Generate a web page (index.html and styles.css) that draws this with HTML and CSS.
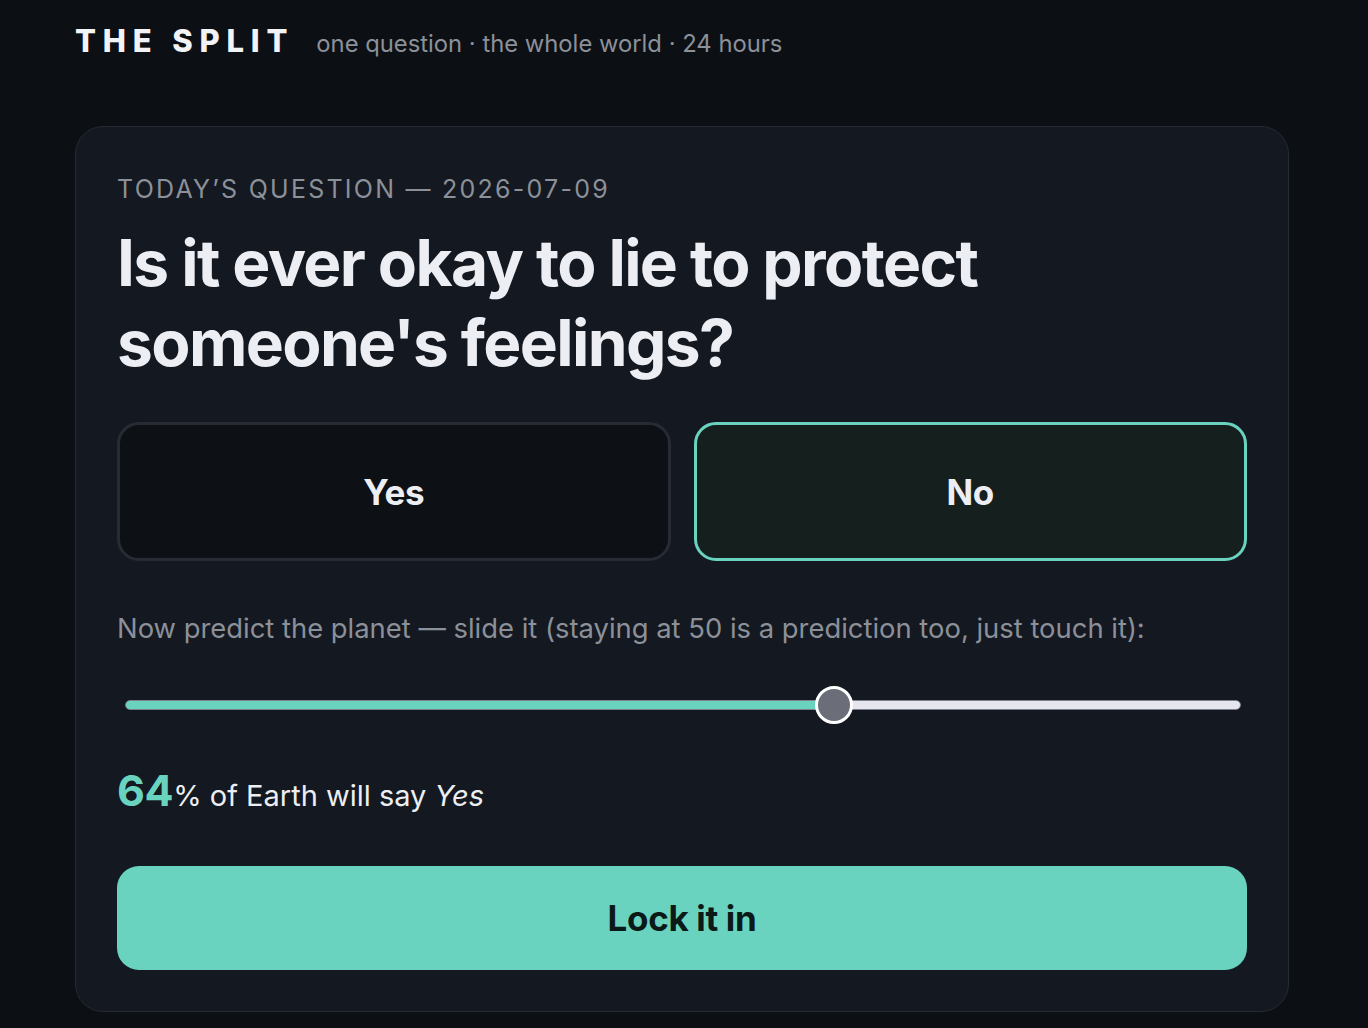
FILE: index.html
```html
<!DOCTYPE html>
<html lang="en">
<head>
  <meta charset="UTF-8">
  <meta name="viewport" content="width=device-width,initial-scale=1">
  <title>The Split</title>
  <link rel="stylesheet" href="styles.css">
</head>
<body>
  <div class="container">
    <header class="header">
      <span class="logo">THE SPLIT</span>
      <span class="tagline">one question · the whole world · 24 hours</span>
    </header>

    <main class="card">
      <p class="eyebrow">Today’s question — 2026-07-09</p>
      <h1 class="question">Is it ever okay to lie to protect<br>someone's feelings?</h1>

      <div class="choices">
        <button class="choice">Yes</button>
        <button class="choice selected">No</button>
      </div>

      <p class="prompt">Now predict the planet — slide it (staying at 50 is a prediction too, just touch it):</p>

      <input class="slider" type="range" min="0" max="100" value="64" aria-label="Predicted percentage saying yes" style="--fill: 64%">

      <p class="guess"><span class="guess-num">64</span>% of Earth will say <em>Yes</em></p>

      <button class="lock">Lock it in</button>
    </main>
  </div>
</body>
</html>
```

FILE: styles.css
```css
:root { --bg: #0c0f14; --card: #141820; --card-border: #252a33; --text: #eceef3; --muted: #8b9099; --accent: #69d3c0; }
body { margin: 0; background: var(--bg); color: var(--text); font-family: Inter, "Noto Sans", sans-serif; }
.container { width: 1214px; margin-left: 75px; }

.header { display: flex; align-items: baseline; gap: 22px; padding-top: 22px; height: 126px; box-sizing: border-box; }
.logo { font-size: 31px; font-weight: 800; letter-spacing: 0.22em; color: #f2f3f6; }
.tagline { font-size: 23.8px; color: var(--muted); }

.card { background: var(--card); border: 1px solid var(--card-border); border-radius: 28px; padding: 47px 41px 41px; }
.eyebrow { margin: 0; font-size: 25px; letter-spacing: 0.09em; text-transform: uppercase; color: var(--muted); }
.question { margin: 19px 0 39px; font-size: 64px; line-height: 80px; font-weight: 700; letter-spacing: -0.025em; color: var(--text); }

.choices { display: grid; grid-template-columns: 1fr 1fr; gap: 23px; }
.choice { height: 139px; background: #0d1015; border: 3px solid #262b34; border-radius: 22px; color: var(--text); font: 700 35px Inter, sans-serif; letter-spacing: -0.01em; cursor: pointer; }
.choice.selected { background: #151f1e; border-color: var(--accent); }

.prompt { margin: 50px 0 0; font-size: 27.4px; color: var(--muted); }

.slider { -webkit-appearance: none; appearance: none; display: block; width: 1116px; height: 38px; margin: 41px 0 0 8px; background: transparent; }
.slider::-webkit-slider-runnable-track { height: 10px; border-radius: 5px; border: 1px solid #7d818c; background: linear-gradient(to right, var(--accent) var(--fill), #e6e6ee var(--fill)); }
.slider::-webkit-slider-thumb { -webkit-appearance: none; width: 38px; height: 38px; margin-top: -15px; border-radius: 50%; background: #6b6d79; border: 3px solid #fff; box-sizing: border-box; }

.guess { margin: 40px 0 0; font-size: 29px; color: var(--text); }
.guess-num { font-size: 43px; font-weight: 700; color: var(--accent); letter-spacing: -0.01em; }
.guess em { font-style: italic; }

.lock { display: block; width: 100%; height: 104px; margin-top: 50px; background: var(--accent); border: none; border-radius: 22px; color: #0b1a17; font: 700 35px Inter, sans-serif; letter-spacing: -0.01em; cursor: pointer; }
```
